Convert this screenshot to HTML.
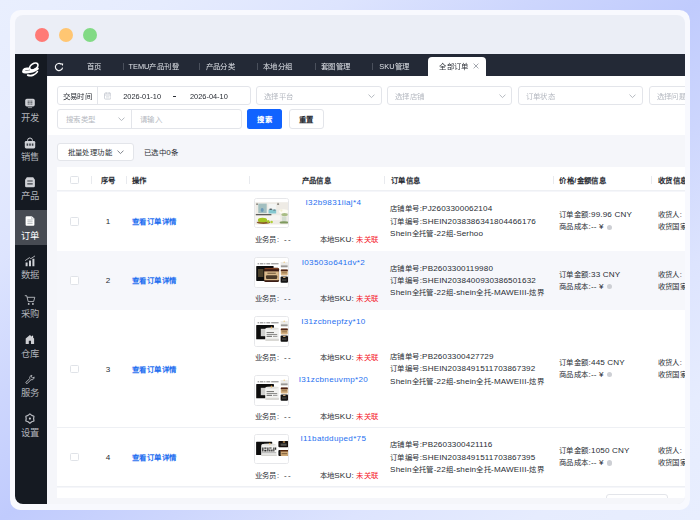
<!DOCTYPE html>
<html lang="zh-CN">
<head>
<meta charset="utf-8">
<title>全部订单</title>
<style>
*{box-sizing:border-box;margin:0;padding:0}
html,body{width:700px;height:520px;overflow:hidden}
body{font-family:"Liberation Sans",sans-serif;background:linear-gradient(to bottom right,#e9effe 0%,#e6ecfe 12%,#dde4fe 25%,#cdd6fd 38%,#c0cbfd 50%,#cdd6fd 62%,#dde4fe 75%,#e6ecfe 88%,#e8eefe 100%);position:relative;color:#292d34}
.frame{position:absolute;left:10px;top:10px;width:680px;height:500px;border-radius:10.5px;background:#f8f9fe}
.win{position:absolute;left:15px;top:15px;width:670px;height:489px;border-radius:8px;background:#ebeef6;overflow:hidden}
.pg{position:absolute;left:-15px;top:-15px;width:700px;height:520px;filter:blur(.33px)}
.a{position:absolute;white-space:nowrap}
.dot{position:absolute;top:28px;width:14px;height:14px;border-radius:50%}
.side{position:absolute;left:0;top:54px;width:47px;height:466px;background:#151a22}
.tabs{position:absolute;left:47px;top:54px;width:653px;height:21.7px;background:#232936}
.main{position:absolute;left:47px;top:75.7px;width:653px;height:445px;background:#f5f6fa}
.panel{position:absolute;left:47.5px;top:75.7px;width:653px;height:59.3px;background:#fff}
.t{position:absolute;white-space:nowrap;font-size:7.4px;line-height:10px;height:10px;margin-top:-4.8px;letter-spacing:.4px;font-weight:500}
.l{font-size:8.1px;letter-spacing:.15px}
.d{letter-spacing:0;font-size:7.4px}
.lk.l{letter-spacing:.31px}
.b{font-weight:bold}
.c{display:inline-block;font-style:normal;white-space:nowrap}
.ph{color:#b4b8c0}
.lk{color:#1f70f0}
.red{color:#f5222d}
.box{position:absolute;background:#fff;border:.75px solid #e3e5ea;border-radius:3px}
.sb{position:absolute;left:15px;width:32px;text-align:center;font-size:9.3px;line-height:12px;height:12px;margin-top:-4.9px;color:#b1b4bb;white-space:nowrap}
.tb{color:#dfe2e8}
.sep{position:absolute;width:.7px;background:#4a505c;top:63px;height:7px}
.hsep{position:absolute;width:.8px;background:#e8eaee;top:176px;height:8px}
.row{position:absolute;left:57.3px;width:640px;background:#fff;border-bottom:1px solid #eef0f4}
.cb{position:absolute;left:70px;width:8.6px;height:8.6px;margin-top:-4.3px;border:.8px solid #e0e3e8;border-radius:1.5px;background:#fff}
.img{position:absolute;left:254.1px;width:34.8px;height:30.6px;border:.7px solid #e6e7ea;border-radius:2.5px;background:#fff;overflow:hidden}
.img svg{position:absolute;left:-.2px;top:-.9px}
.qi{position:absolute;left:607.1px;width:5.4px;height:5.4px;margin-top:-2.7px;border-radius:50%;background:#cdcfd4}
</style>
</head>
<body>
<svg width="0" height="0" style="position:absolute"><defs><filter id="bl" x="-5%" y="-5%" width="110%" height="110%"><feGaussianBlur stdDeviation=".5"/></filter></defs></svg>
<div class="frame"></div>
<div class="win"><div class="pg">
  <div class="dot" style="left:35px;background:#ff7a76"></div>
  <div class="dot" style="left:59px;background:#ffc672"></div>
  <div class="dot" style="left:83px;background:#82da85"></div>
  <div class="side"></div>
  <div class="tabs"></div>
  <div class="main"></div>
  <div class="panel"></div>
  <div class="a" style="left:0;top:210.4px;width:47px;height:34.8px;background:#474b53"></div>
  <svg class="a" style="left:19px;top:58px" width="24" height="24" viewBox="0 0 24 24"><g fill="none" stroke="#fff" stroke-linecap="round"><ellipse cx="14.8" cy="8.5" rx="4.6" ry="2.8" transform="rotate(-33 14.8 8.5)" stroke-width="1.7"/><path d="M18.4 10.7C15 13.2 10 14.4 4.7 13.8" stroke-width="2.8"/><path d="M4.5 13.3C4.6 11.3 6.4 10.3 9.4 10.8" stroke-width="2.5"/><path d="M8.7 17.1c3.4 1.4 7.6 -.2 9.7-3.5" stroke-width="1.7"/></g></svg>
  <svg class="a" style="left:24.1px;top:97.30px" width="12" height="12" viewBox="0 0 12 12"><rect x="1.2" y="1.8" width="9.6" height="7.6" rx="1.6" fill="#cfd1d6"/><path d="M3.6 4.1h4.8M3.6 5.6h4.8M3.6 7.1h4.8" stroke="#151a22" stroke-width=".8" opacity=".75"/><path d="M6 3.2v4.8" stroke="#cfd1d6" stroke-width=".7"/><path d="M3.9 10.6h4.2" stroke="#cfd1d6" stroke-width=".8" opacity=".8"/></svg>
  <div class="sb" style="left:14.1px;top:116.60px">开发</div>
  <svg class="a" style="left:24.1px;top:136.65px" width="12" height="12" viewBox="0 0 12 12"><path d="M3.6 4.6V3.4a2.4 2.4 0 0 1 4.8 0v1.2" fill="none" stroke="#cfd1d6" stroke-width="1"/><rect x=".8" y="4" width="10.4" height="7.4" rx="1.3" fill="#cfd1d6"/><path d="M2.6 6.4h1.6v2.4H2.6zM5.2 6.4h1.6v2.4H5.2zM7.8 6.4h1.6v2.4H7.8z" fill="#151a22" opacity=".8"/></svg>
  <div class="sb" style="left:14.1px;top:155.95px">销售</div>
  <svg class="a" style="left:24.1px;top:176.00px" width="12" height="12" viewBox="0 0 12 12"><path d="M2.8 1.2h6.4l1.7 2.6v6.2a1.2 1.2 0 0 1-1.2 1.2H2.3A1.2 1.2 0 0 1 1.1 10V3.8z" fill="#cfd1d6"/><path d="M3.3 4.4h5.4v1.2H3.3zM3.3 7.2h5.4v1.2H3.3z" fill="#151a22" opacity=".8"/></svg>
  <div class="sb" style="left:14.1px;top:195.30px">产品</div>
  <svg class="a" style="left:24.1px;top:215.35px" width="12" height="12" viewBox="0 0 12 12"><path d="M2.6 1.2h5.2l2.6 2.4v6.2a1 1 0 0 1-1 1H2.6a1 1 0 0 1-1-1V2.2a1 1 0 0 1 1-1z" fill="#ffffff"/><path d="M3.4 5h5.2M3.4 6.8h5.2M3.4 8.6h5.2" stroke="#9a9da4" stroke-width=".7"/><path d="M7.6 1.4v2.4h2.6" fill="none" stroke="#a8abb2" stroke-width=".6"/></svg>
  <div class="sb" style="left:14.1px;top:234.65px;color:#fff">订单</div>
  <svg class="a" style="left:24.1px;top:254.70px" width="12" height="12" viewBox="0 0 12 12"><path d="M1.6 7.6h2v3.6h-2zM5 5.6h2v5.6H5zM8.4 3.8h2v7.4h-2z" fill="#cfd1d6"/><path d="M1.2 5.6L5.4 2.7l1.4 1L11 .9" fill="none" stroke="#cfd1d6" stroke-width=".8"/></svg>
  <div class="sb" style="left:14.1px;top:274.00px">数据</div>
  <svg class="a" style="left:24.1px;top:294.05px" width="12" height="12" viewBox="0 0 12 12"><path d="M.8 1.7h1.9l1.5 5.9h5.4l1.2-4.3H3.2" fill="none" stroke="#c4c6cb" stroke-width=".85" stroke-linejoin="round"/><circle cx="4.7" cy="9.9" r=".9" fill="#cfd1d6"/><circle cx="8.9" cy="9.9" r=".9" fill="#cfd1d6"/></svg>
  <div class="sb" style="left:14.1px;top:313.35px">采购</div>
  <svg class="a" style="left:24.1px;top:333.40px" width="12" height="12" viewBox="0 0 12 12"><path d="M5.9 2.1L10.1 5.5V11.1H7V7.7H4.8V11.1H1.7V5.5z" fill="#cdced2"/><rect x="7.9" y="2.7" width="1.2" height="2.2" fill="#e4e4e6"/></svg>
  <div class="sb" style="left:14.1px;top:352.70px">仓库</div>
  <svg class="a" style="left:24.1px;top:372.75px" width="12" height="12" viewBox="0 0 12 12"><g transform="translate(6 6.4) scale(.86) translate(-6 -6)"><path d="M8.2 1.3a2.7 2.7 0 0 0-2.4 3.6L1.5 9.2a1 1 0 0 0 1.4 1.4l4.3-4.3a2.7 2.7 0 0 0 3.5-3.2L9.2 4.6 7.6 3z" fill="none" stroke="#b9bbc1" stroke-width="1.1" stroke-linejoin="round"/></g></svg>
  <div class="sb" style="left:14.1px;top:392.05px">服务</div>
  <svg class="a" style="left:24.1px;top:412.10px" width="12" height="12" viewBox="0 0 12 12"><path d="M5.90 1.90 L7.75 3.40 L9.97 4.25 L9.60 6.60 L9.97 8.95 L7.75 9.80 L5.90 11.30 L4.05 9.80 L1.83 8.95 L2.20 6.60 L1.83 4.25 L4.05 3.40z" fill="none" stroke="#b9bbc1" stroke-width="1.2" stroke-linejoin="round"/><circle cx="5.9" cy="6.6" r="1.1" fill="#c9cbd0"/></svg>
  <div class="sb" style="left:14.1px;top:431.40px">设置</div>
  <svg class="a" style="left:53.5px;top:61.5px" width="10" height="10" viewBox="0 0 10 10"><path d="M7.25 2.2A3.6 3.6 0 1 0 8.55 5.6" fill="none" stroke="#f4f5f7" stroke-width="1.15"/><path d="M6.6 1.5l2.6-.1-.3 2.7z" fill="#fff"/></svg>
  <div class="t tb" style="left:86.6px;top:66.9px"><i class="c" style="width:14.8px">首页</i></div>
  <div class="t tb" style="left:128.5px;top:66.9px"><span class="d">TEMU</span><i class="c" style="width:29.6px">产品刊登</i></div>
  <div class="t tb" style="left:205.5px;top:66.9px"><i class="c" style="width:29.6px">产品分类</i></div>
  <div class="t tb" style="left:263px;top:66.9px"><i class="c" style="width:29.6px">本地分组</i></div>
  <div class="t tb" style="left:321px;top:66.9px"><i class="c" style="width:29.6px">套图管理</i></div>
  <div class="t tb" style="left:379.3px;top:66.9px"><span class="d">SKU</span><i class="c" style="width:14.8px">管理</i></div>
  <div class="sep" style="left:123.1px"></div>
  <div class="sep" style="left:199px"></div>
  <div class="sep" style="left:256.9px"></div>
  <div class="sep" style="left:314.5px"></div>
  <div class="sep" style="left:372.4px"></div>
  <div class="a" style="left:428.3px;top:57px;width:57.6px;height:19px;background:#fff;border-radius:4px 4px 0 0"></div>
  <div class="t" style="left:439.2px;top:66.9px;color:#2b2f36">全部订单</div>
  <svg class="a" style="left:473.2px;top:63.2px" width="6" height="6" viewBox="0 0 6 6"><path d="M.6.6l4.8 4.8M5.4.6L.6 5.4" stroke="#7d828c" stroke-width=".7"/></svg>
  <div class="box" style="left:57px;top:86px;width:193.7px;height:19.1px"></div>
  <div class="a" style="left:97px;top:86.4px;width:.75px;height:18.4px;background:#e3e5ea"></div>
  <div class="t" style="left:62.6px;top:96.7px">交易时间</div>
  <svg class="a" style="left:104.1px;top:92.3px" width="7.4" height="7.6" viewBox="0 0 7.4 7.6"><rect x=".5" y="1.1" width="6.4" height="6" rx=".9" fill="none" stroke="#bcc0c9" stroke-width=".7"/><path d="M.6 3h6.2M2.2.3v1.6M5.2.3v1.6" stroke="#bcc0c9" stroke-width=".7"/><path d="M2 4.5h3.4M2 5.8h3.4" stroke="#d3d6db" stroke-width=".6"/></svg>
  <div class="t d" style="left:123.2px;top:96.7px">2026-01-10</div>
  <div class="a" style="left:172.6px;top:95.8px;width:3.4px;height:1.2px;background:#2b2f36"></div>
  <div class="t d" style="left:190px;top:96.7px">2026-04-10</div>
  <div class="box" style="left:256.1px;top:86px;width:125.5px;height:19.1px"></div>
  <div class="t ph" style="left:264.1px;top:96.7px">选择平台</div>
  <svg class="a" style="left:367.8px;top:94.4px" width="7" height="4.4" viewBox="0 0 7 4.4"><path d="M.5.6l3 3 3-3" fill="none" stroke="#a9adb5" stroke-width=".85"/></svg>
  <div class="box" style="left:386.9px;top:86px;width:125.5px;height:19.1px"></div>
  <div class="t ph" style="left:394.9px;top:96.7px">选择店铺</div>
  <svg class="a" style="left:498.6px;top:94.4px" width="7" height="4.4" viewBox="0 0 7 4.4"><path d="M.5.6l3 3 3-3" fill="none" stroke="#a9adb5" stroke-width=".85"/></svg>
  <div class="box" style="left:517.7px;top:86px;width:125.5px;height:19.1px"></div>
  <div class="t ph" style="left:525.7px;top:96.7px">订单状态</div>
  <svg class="a" style="left:629.4px;top:94.4px" width="7" height="4.4" viewBox="0 0 7 4.4"><path d="M.5.6l3 3 3-3" fill="none" stroke="#a9adb5" stroke-width=".85"/></svg>
  <div class="box" style="left:648.5px;top:86px;width:125.5px;height:19.1px"></div>
  <div class="t ph" style="left:656.5px;top:96.7px">选择问题类型</div>
  <svg class="a" style="left:760.2px;top:94.4px" width="7" height="4.4" viewBox="0 0 7 4.4"><path d="M.5.6l3 3 3-3" fill="none" stroke="#a9adb5" stroke-width=".85"/></svg>
  <div class="box" style="left:57px;top:109.4px;width:184.5px;height:19.2px"></div>
  <div class="a" style="left:131.2px;top:109.8px;width:.75px;height:18.4px;background:#e3e5ea"></div>
  <div class="t ph" style="left:65.8px;top:119.6px">搜索类型</div>
  <svg class="a" style="left:117.7px;top:116.7px" width="7" height="4.4" viewBox="0 0 7 4.4"><path d="M.5.6l3 3 3-3" fill="none" stroke="#a9adb5" stroke-width=".85"/></svg>
  <div class="t ph" style="left:140px;top:119.6px">请输入</div>
  <div class="a" style="left:247px;top:109.4px;width:35.2px;height:19.2px;background:#1163ff;border-radius:2.5px"></div>
  <div class="t b" style="left:247px;width:35.2px;text-align:center;top:119.6px;color:#fff">搜索</div>
  <div class="box" style="left:288.7px;top:109.4px;width:35.3px;height:19.2px"></div>
  <div class="t" style="left:288.7px;width:35.3px;text-align:center;top:119.6px;font-weight:bold">重置</div>
  <div class="box" style="left:57.3px;top:142.7px;width:76.8px;height:18.8px"></div>
  <div class="t" style="left:67.6px;top:152.4px">批量处理功能</div>
  <svg class="a" style="left:116.9px;top:150.2px" width="7" height="4.4" viewBox="0 0 7 4.4"><path d="M.5.6l3 3 3-3" fill="none" stroke="#6b7078" stroke-width=".85"/></svg>
  <div class="t" style="left:144px;top:152.4px"><i class="c" style="width:22.2px">已选中</i><span class="l">0</span><i class="c" style="width:7.4px">条</i></div>
  <div class="row" style="top:166.8px;height:24.7px"></div>
  <div class="cb" style="top:180.10000000000002px"></div>
  <div class="hsep" style="left:91.3px"></div>
  <div class="hsep" style="left:125.6px"></div>
  <div class="hsep" style="left:248.8px"></div>
  <div class="hsep" style="left:384.3px"></div>
  <div class="hsep" style="left:552.6px"></div>
  <div class="hsep" style="left:651.3px"></div>
  <div class="t b" style="left:100.9px;top:180.3px">序号</div>
  <div class="t b" style="left:132px;top:180.3px">操作</div>
  <div class="t b" style="left:301.7px;top:180.3px">产品信息</div>
  <div class="t b" style="left:390.9px;top:180.3px">订单信息</div>
  <div class="t b" style="left:559.4px;top:180.3px">价格/金额信息</div>
  <div class="t b" style="left:657.8px;top:180.3px">收货信息</div>
  <div class="row" style="top:191.5px;height:60.1px;background:#fff"></div>
  <div class="cb" style="top:221.4px"></div>
  <div class="t l" style="left:98px;width:20px;text-align:center;top:221.8px">1</div>
  <div class="t lk b" style="left:132px;top:221.8px">查看订单详情</div>
  <div class="img" style="top:197.8px"><svg width="34.2" height="30.6" viewBox="0 0 34.2 30.6"><rect width="34.2" height="30.6" fill="#fff"/><g filter="url(#bl)"><rect x=".3" y="4.2" width="33.4" height="22.3" fill="#eeebe5"/><rect x=".3" y="17.2" width="25" height="5" fill="#f7f5f1"/><rect x="3.3" y="5.6" width="8.4" height="9.5" fill="#a2bfc0"/><ellipse cx="7.2" cy="12" rx="1.5" ry="1.9" fill="#6a98b8"/><rect x="13.5" y="6" width="7.7" height="9.5" fill="#f3f5f4"/><rect x="13.5" y="11.6" width="7.7" height="3.9" fill="#86c8cf"/><ellipse cx="15.8" cy="11.2" rx="1.6" ry=".8" fill="#4b5a60"/><ellipse cx="19.4" cy="12" rx="1.3" ry=".6" fill="#5a6a70"/><path d="M1 6.8l1-2 1.2 2zM22 6.8l1-2.2 1.3 2.2z" fill="#6f6a63"/><rect x=".8" y="16" width="15.6" height="1.3" fill="#5f5d5a"/><ellipse cx="28.6" cy="13.4" rx="4.5" ry="2.2" fill="#fdfcf4"/><circle cx="26.4" cy="12.6" r="1.1" fill="#f3efcf"/><ellipse cx="29.6" cy="16.6" rx="3.2" ry="1.6" fill="#a9bd85"/><rect x="27" y="18.5" width="4.4" height="5.4" fill="#d3ddd0"/><ellipse cx="29" cy="24.4" rx="4.4" ry="1.2" fill="#7f9a5e"/><ellipse cx="8.5" cy="24.6" rx="6.8" ry="1.4" fill="#8b5a2b"/><ellipse cx="7.5" cy="22" rx="4.6" ry="2.3" fill="#a3c520"/><circle cx="13.2" cy="23.6" r="1.5" fill="#a9c92a"/><circle cx="16.6" cy="24" r="1.3" fill="#b0cf35"/></g></svg></div>
  <div class="t lk l" style="left:283.4px;width:100px;text-align:center;top:203.1px">I32b9831iiaj*4</div>
  <div class="t" style="left:254.7px;top:239.5px"><i class="c" style="width:22.2px">业务员</i>:<span class="l" style="letter-spacing:1.3px;margin-left:4.6px">--</span></div>
  <div class="t" style="left:319.5px;top:239.5px"><i class="c" style="width:14.8px">本地</i><span class="l">SKU:</span> <span class="red">未关联</span></div>
  <div class="t" style="left:390.1px;top:209.2px"><i class="c" style="width:29.6px">店铺单号</i><span class="l">:PJ2603300062104</span></div>
  <div class="t" style="left:390.1px;top:221.6px"><i class="c" style="width:29.6px">订单编号</i><span class="l">:SHEIN2038386341804466176</span></div>
  <div class="t" style="left:390.1px;top:234.0px"><span class="l">Shein</span><i class="c" style="width:22.2px">全托管</i><span class="l">-22</span><i class="c" style="width:7.4px">组</i><span class="l">-Serhoo</span></div>
  <div class="t" style="left:559px;top:215.1px"><i class="c" style="width:29.6px">订单金额</i><span class="l">:99.96 CNY</span></div>
  <div class="t" style="left:559px;top:227.1px"><i class="c" style="width:29.6px">商品成本</i><span class="l">:-- ¥</span></div>
  <div class="qi" style="top:227.2px"></div>
  <div class="t" style="left:657.5px;top:215.1px">收货人:</div>
  <div class="t" style="left:657.5px;top:227.1px">收货国家:</div>
  <div class="row" style="top:251.0px;height:59.6px;background:#f6f7fb"></div>
  <div class="cb" style="top:280.7px"></div>
  <div class="t l" style="left:98px;width:20px;text-align:center;top:281.0px">2</div>
  <div class="t lk b" style="left:132px;top:281.0px">查看订单详情</div>
  <div class="img" style="top:257.3px"><svg width="34.2" height="30.6" viewBox="0 0 34.2 30.6"><rect width="34.2" height="30.6" fill="#fff"/><g filter="url(#bl)"><path d="M2.6 6.8h1.6M5 6.8h3.4M9.2 6.8h1.2M11.4 6.8h3.8M16.2 6.8h7.4" stroke="#555" stroke-width="1" opacity=".75"/><rect x="1.2" y="8.9" width="17.4" height="15" rx=".6" fill="#0d0c0c"/><rect x="3" y="12" width="5.4" height="8" fill="#5d4e33" opacity=".8"/><rect x="9.1" y="10.7" width="15" height="14.3" rx="1.6" fill="#3a1c12"/><rect x="9.6" y="11" width="14" height="1.3" rx=".6" fill="#7c3f22"/><rect x="9.3" y="14.4" width="14.6" height="8.8" fill="#dbbb8d"/><rect x="11" y="18.3" width="11.2" height="3.8" rx="1" fill="#4b3b2a"/><rect x="12.4" y="15.6" width="8.4" height="1.4" fill="#8a7150"/><rect x="25.6" y="4.9" width="7.3" height="5.8" rx=".6" fill="#ecebe8"/><rect x="25.9" y="8.4" width="6.7" height="1.8" fill="#9a9895"/><circle cx="29.2" cy="5.2" r=".6" fill="#f0c060"/><rect x="25.8" y="12.6" width="7" height="5.8" rx=".8" fill="#d6b283"/><rect x="25.8" y="12.6" width="7" height="1.7" rx=".5" fill="#4a2113"/><rect x="26.6" y="15.4" width="5.4" height=".9" fill="#8a6a40"/><rect x="25.6" y="19.5" width="7.4" height="6.2" rx="1" fill="#131212"/><ellipse cx="29.3" cy="20.4" rx="1.4" ry=".7" fill="#c9a676"/><rect x="27" y="22.2" width="4.6" height="1.8" fill="#3a3937"/></g></svg></div>
  <div class="t lk l" style="left:283.4px;width:100px;text-align:center;top:262.6px">I03503o641dv*2</div>
  <div class="t" style="left:254.7px;top:299.0px"><i class="c" style="width:22.2px">业务员</i>:<span class="l" style="letter-spacing:1.3px;margin-left:4.6px">--</span></div>
  <div class="t" style="left:319.5px;top:299.0px"><i class="c" style="width:14.8px">本地</i><span class="l">SKU:</span> <span class="red">未关联</span></div>
  <div class="t" style="left:390.1px;top:268.4px"><i class="c" style="width:29.6px">店铺单号</i><span class="l">:PB2603300119980</span></div>
  <div class="t" style="left:390.1px;top:280.8px"><i class="c" style="width:29.6px">订单编号</i><span class="l">:SHEIN2038400930386501632</span></div>
  <div class="t" style="left:390.1px;top:293.2px"><span class="l">Shein</span><i class="c" style="width:22.2px">全托管</i><span class="l">-22</span><i class="c" style="width:7.4px">组</i><span class="l">-shein</span><i class="c" style="width:14.8px">全托</i><span class="l">-MAWEIII-</span><i class="c" style="width:14.8px">炫界</i></div>
  <div class="t" style="left:559px;top:274.3px"><i class="c" style="width:29.6px">订单金额</i><span class="l">:33 CNY</span></div>
  <div class="t" style="left:559px;top:286.3px"><i class="c" style="width:29.6px">商品成本</i><span class="l">:-- ¥</span></div>
  <div class="qi" style="top:286.4px"></div>
  <div class="t" style="left:657.5px;top:274.3px">收货人:</div>
  <div class="t" style="left:657.5px;top:286.3px">收货国家:</div>
  <div class="row" style="top:310.0px;height:118.2px;background:#fff"></div>
  <div class="cb" style="top:369.0px"></div>
  <div class="t l" style="left:98px;width:20px;text-align:center;top:369.3px">3</div>
  <div class="t lk b" style="left:132px;top:369.3px">查看订单详情</div>
  <div class="img" style="top:316.3px"><svg width="34.2" height="30.6" viewBox="0 0 34.2 30.6"><rect width="34.2" height="30.6" fill="#fff"/><g filter="url(#bl)"><path d="M2.6 6.8h1.6M5 6.8h3.4M9.2 6.8h1.2M11.4 6.8h3.8M16.2 6.8h7.4" stroke="#555" stroke-width="1" opacity=".75"/><rect x="1.2" y="8.9" width="17.8" height="14.4" rx=".6" fill="#0b0b0b"/><rect x="5.8" y="12.8" width="6" height="7.4" fill="#cfcfcd"/><rect x="10.2" y="12.2" width="13.9" height="12.8" rx="1.6" fill="#f3f3f1"/><rect x="10.2" y="22.8" width="13.9" height="2.2" rx="1" fill="#d9d8d4"/><ellipse cx="17.1" cy="12.6" rx="6.6" ry="1.1" fill="#e3e2de"/><ellipse cx="16.4" cy="11.4" rx=".7" ry="1" fill="#e3a64a"/><rect x="11.6" y="16" width="7.4" height="1.1" fill="#7b7b79"/><rect x="11.6" y="18" width="10.6" height="1" fill="#8f8f8d"/><rect x="11.6" y="19.8" width="5.4" height="1.1" fill="#6f6f6d"/><rect x="18" y="19.8" width="4.4" height="1.1" fill="#9a9a98"/><rect x="25.6" y="4.9" width="7.3" height="5.8" rx=".6" fill="#ecebe8"/><rect x="25.9" y="8.4" width="6.7" height="1.8" fill="#9a9895"/><circle cx="29.2" cy="5.2" r=".6" fill="#f0c060"/><rect x="25.8" y="12.6" width="7" height="5.8" rx=".8" fill="#d6b283"/><rect x="25.8" y="12.6" width="7" height="1.7" rx=".5" fill="#4a2113"/><rect x="26.6" y="15.4" width="5.4" height=".9" fill="#8a6a40"/><rect x="25.6" y="19.5" width="7.4" height="6.2" rx="1" fill="#131212"/><ellipse cx="29.3" cy="20.4" rx="1.4" ry=".7" fill="#c9a676"/><rect x="27" y="22.2" width="4.6" height="1.8" fill="#3a3937"/></g></svg></div>
  <div class="t lk l" style="left:283.4px;width:100px;text-align:center;top:321.6px">I31zcbnepfzy*10</div>
  <div class="t" style="left:254.7px;top:358.0px"><i class="c" style="width:22.2px">业务员</i>:<span class="l" style="letter-spacing:1.3px;margin-left:4.6px">--</span></div>
  <div class="t" style="left:319.5px;top:358.0px"><i class="c" style="width:14.8px">本地</i><span class="l">SKU:</span> <span class="red">未关联</span></div>
  <div class="img" style="top:375.1px"><svg width="34.2" height="30.6" viewBox="0 0 34.2 30.6"><rect width="34.2" height="30.6" fill="#fff"/><g filter="url(#bl)"><path d="M2.6 6.8h1.6M5 6.8h3.4M9.2 6.8h1.2M11.4 6.8h3.8M16.2 6.8h7.4" stroke="#555" stroke-width="1" opacity=".75"/><rect x="1.2" y="8.9" width="17.8" height="14.4" rx=".6" fill="#0b0b0b"/><rect x="5.8" y="12.8" width="6" height="7.4" fill="#cfcfcd"/><rect x="10.2" y="12.2" width="13.9" height="12.8" rx="1.6" fill="#f3f3f1"/><rect x="10.2" y="22.8" width="13.9" height="2.2" rx="1" fill="#d9d8d4"/><ellipse cx="17.1" cy="12.6" rx="6.6" ry="1.1" fill="#e3e2de"/><ellipse cx="16.4" cy="11.4" rx=".7" ry="1" fill="#e3a64a"/><rect x="11.6" y="16" width="7.4" height="1.1" fill="#7b7b79"/><rect x="11.6" y="18" width="10.6" height="1" fill="#8f8f8d"/><rect x="11.6" y="19.8" width="5.4" height="1.1" fill="#6f6f6d"/><rect x="18" y="19.8" width="4.4" height="1.1" fill="#9a9a98"/><rect x="25.6" y="4.9" width="7.3" height="5.8" rx=".6" fill="#ecebe8"/><rect x="25.9" y="8.4" width="6.7" height="1.8" fill="#9a9895"/><circle cx="29.2" cy="5.2" r=".6" fill="#f0c060"/><rect x="25.8" y="12.6" width="7" height="5.8" rx=".8" fill="#d6b283"/><rect x="25.8" y="12.6" width="7" height="1.7" rx=".5" fill="#4a2113"/><rect x="26.6" y="15.4" width="5.4" height=".9" fill="#8a6a40"/><rect x="25.6" y="19.5" width="7.4" height="6.2" rx="1" fill="#131212"/><ellipse cx="29.3" cy="20.4" rx="1.4" ry=".7" fill="#c9a676"/><rect x="27" y="22.2" width="4.6" height="1.8" fill="#3a3937"/></g></svg></div>
  <div class="t lk l" style="left:283.4px;width:100px;text-align:center;top:379.6px">I31zcbneuvmp*20</div>
  <div class="t" style="left:254.7px;top:416.8px"><i class="c" style="width:22.2px">业务员</i>:<span class="l" style="letter-spacing:1.3px;margin-left:4.6px">--</span></div>
  <div class="t" style="left:319.5px;top:416.8px"><i class="c" style="width:14.8px">本地</i><span class="l">SKU:</span> <span class="red">未关联</span></div>
  <div class="t" style="left:390.1px;top:356.7px"><i class="c" style="width:29.6px">店铺单号</i><span class="l">:PB2603300427729</span></div>
  <div class="t" style="left:390.1px;top:369.1px"><i class="c" style="width:29.6px">订单编号</i><span class="l">:SHEIN2038491511703867392</span></div>
  <div class="t" style="left:390.1px;top:381.5px"><span class="l">Shein</span><i class="c" style="width:22.2px">全托管</i><span class="l">-22</span><i class="c" style="width:7.4px">组</i><span class="l">-shein</span><i class="c" style="width:14.8px">全托</i><span class="l">-MAWEIII-</span><i class="c" style="width:14.8px">炫界</i></div>
  <div class="t" style="left:559px;top:362.6px"><i class="c" style="width:29.6px">订单金额</i><span class="l">:445 CNY</span></div>
  <div class="t" style="left:559px;top:374.6px"><i class="c" style="width:29.6px">商品成本</i><span class="l">:-- ¥</span></div>
  <div class="qi" style="top:374.7px"></div>
  <div class="t" style="left:657.5px;top:362.6px">收货人:</div>
  <div class="t" style="left:657.5px;top:374.6px">收货国家:</div>
  <div class="row" style="top:427.6px;height:59.4px;background:#fff"></div>
  <div class="cb" style="top:457.2px"></div>
  <div class="t l" style="left:98px;width:20px;text-align:center;top:457.5px">4</div>
  <div class="t lk b" style="left:132px;top:457.5px">查看订单详情</div>
  <div class="img" style="top:433.9px"><svg width="34.2" height="30.6" viewBox="0 0 34.2 30.6"><rect width="34.2" height="30.6" fill="#fff"/><g filter="url(#bl)"><rect x="1.1" y="7.8" width="16.1" height="13.2" rx=".6" fill="#0b0b0b"/><rect x="6.2" y="10" width="15.7" height="12.1" rx="1.8" fill="#f2f2f0"/><ellipse cx="14" cy="10.6" rx="6.8" ry="1.2" fill="#e2e1dd"/><ellipse cx="14.8" cy="9.6" rx=".7" ry=".9" fill="#e3a64a"/><path d="M7.2 13.4h1.3v4.2H7.2zM9.3 13.4h2.2v1.4H9.3zM9.3 15.8h2.2v1.8H9.3zM12.3 13.4h1.2v4.2h-1.2zM14.2 13.4h2.4v1.2h-2.4zM14.2 15.4h1.3v2.2h-1.3zM16.2 15.6h1.4v2h-1.4zM18.3 13.4h1.1v4.2h-1.1zM19.9 13.4h1.3v2.4h-1.3z" fill="#2a2a2a"/><rect x="6.8" y="18.4" width="14.4" height=".8" fill="#777" opacity=".7"/><rect x="6.2" y="20.4" width="15.7" height="1.7" rx=".8" fill="#d6d5d1"/><rect x="23.4" y="7.1" width="9.9" height="6.2" rx="1" fill="#121111"/><ellipse cx="29" cy="8" rx="1.3" ry=".7" fill="#d19a55"/><rect x="25.6" y="9.6" width="6" height="2.2" fill="#55534f"/><rect x="23.4" y="15.9" width="9.9" height="6.2" rx="1" fill="#141212"/><rect x="25.6" y="15.9" width="7.7" height="6.2" rx="1" fill="#cfa876"/><rect x="25.6" y="15.9" width="7.7" height="1.7" rx=".6" fill="#55260f"/><rect x="26.6" y="19" width="5.6" height="1.2" fill="#8a6a44"/></g></svg></div>
  <div class="t lk l" style="left:283.4px;width:100px;text-align:center;top:439.2px">I11batdduped*75</div>
  <div class="t" style="left:254.7px;top:475.6px"><i class="c" style="width:22.2px">业务员</i>:<span class="l" style="letter-spacing:1.3px;margin-left:4.6px">--</span></div>
  <div class="t" style="left:319.5px;top:475.6px"><i class="c" style="width:14.8px">本地</i><span class="l">SKU:</span> <span class="red">未关联</span></div>
  <div class="t" style="left:390.1px;top:444.9px"><i class="c" style="width:29.6px">店铺单号</i><span class="l">:PB2603300421116</span></div>
  <div class="t" style="left:390.1px;top:457.3px"><i class="c" style="width:29.6px">订单编号</i><span class="l">:SHEIN2038491511703867395</span></div>
  <div class="t" style="left:390.1px;top:469.7px"><span class="l">Shein</span><i class="c" style="width:22.2px">全托管</i><span class="l">-22</span><i class="c" style="width:7.4px">组</i><span class="l">-shein</span><i class="c" style="width:14.8px">全托</i><span class="l">-MAWEIII-</span><i class="c" style="width:14.8px">炫界</i></div>
  <div class="t" style="left:559px;top:450.8px"><i class="c" style="width:29.6px">订单金额</i><span class="l">:1050 CNY</span></div>
  <div class="t" style="left:559px;top:462.8px"><i class="c" style="width:29.6px">商品成本</i><span class="l">:-- ¥</span></div>
  <div class="qi" style="top:462.9px"></div>
  <div class="t" style="left:657.5px;top:450.8px">收货人:</div>
  <div class="t" style="left:657.5px;top:462.8px">收货国家:</div>
  <div class="a" style="left:57.3px;top:487.8px;width:640px;height:9.8px;background:#fff;overflow:hidden"><div class="box" style="left:549.1px;top:6.6px;width:62px;height:18px;border-radius:3px"></div></div>
</div></div>
</body>
</html>
